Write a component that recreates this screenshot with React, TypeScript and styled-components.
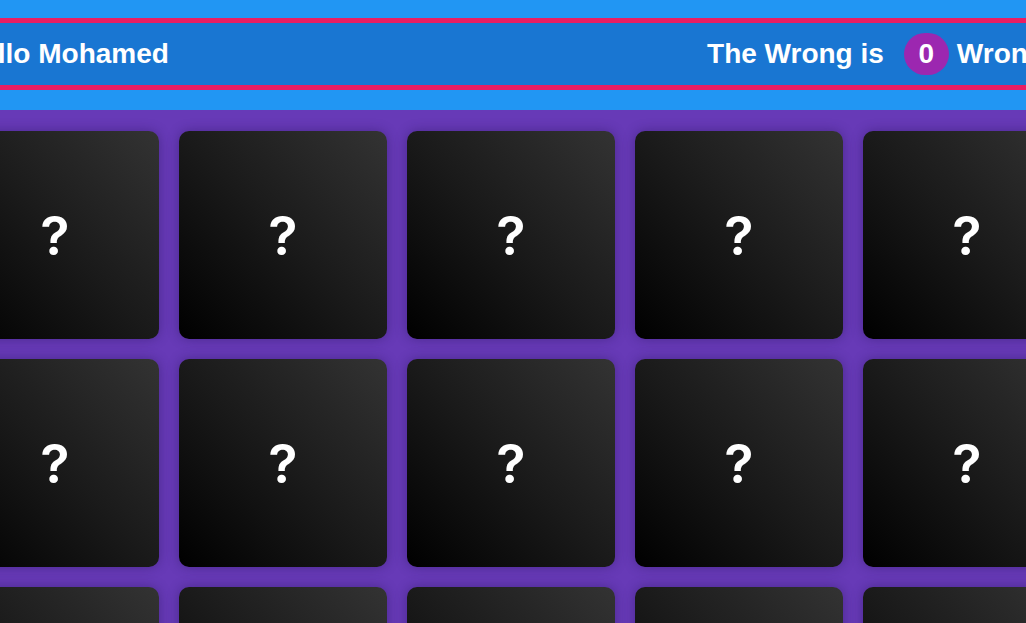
import React from 'react'
import styled, { createGlobalStyle } from 'styled-components'

const GlobalStyle = createGlobalStyle`
  html, body {
    margin: 0;
    padding: 0;
    background-color: #673ab7;
    font-family: "Liberation Sans", Arial, sans-serif;
    overflow: hidden;
  }
`

export const Header = styled.div`
  background-color: #2196f3;
  padding: 18px 0 20px;
`

export const InfoBar = styled.div`
  background-color: #1976d2;
  border-top: 5px solid #e91e63;
  border-bottom: 5px solid #e91e63;
  height: 62px;
  display: flex;
  justify-content: center;
  overflow: hidden;
`

export const InfoInner = styled.div`
  flex: 0 0 1124px;
  box-sizing: border-box;
  padding: 0 30px 0 11px;
  display: flex;
  align-items: center;
  justify-content: space-between;
  color: #fff;
  font-size: 28px;
  font-weight: 700;
`

export const Name = styled.span`
  white-space: nowrap;
`

export const Tries = styled.div`
  display: flex;
  align-items: center;
  white-space: nowrap;
`

export const Badge = styled.span`
  display: inline-flex;
  align-items: center;
  justify-content: center;
  width: 45px;
  height: 42px;
  border-radius: 21px;
  background-color: #9c27b0;
  margin: 0 8px 0 20px;
`

export const Board = styled.div`
  display: flex;
  justify-content: center;
  padding-top: 21px;
`

export const Grid = styled.div`
  flex: 0 0 1124px;
  display: grid;
  grid-template-columns: repeat(5, 208px);
  grid-auto-rows: 208px;
  gap: 20px;
`

export const Card = styled.div`
  border-radius: 10px;
  background: linear-gradient(45deg, #000 0%, #1a1a1a 50%, #333 100%);
  box-shadow: 0 0 12px rgba(40, 20, 90, 0.45);
  display: flex;
  align-items: center;
  justify-content: center;
  color: #fff;
  font-family: Inter, "Liberation Sans", sans-serif;
  font-size: 54px;
  font-weight: 600;
  user-select: none;
`

const cards = Array.from({ length: 15 }, (_, i) => i)

export default function App() {
  return (
    <>
      <GlobalStyle />
      <Header>
        <InfoBar>
          <InfoInner>
            <Name>Hello Mohamed</Name>
            <Tries>
              The Wrong is
              <Badge>0</Badge>
              Wrong
            </Tries>
          </InfoInner>
        </InfoBar>
      </Header>
      <Board>
        <Grid>
          {cards.map((c) => (
            <Card key={c}>?</Card>
          ))}
        </Grid>
      </Board>
    </>
  )
}
